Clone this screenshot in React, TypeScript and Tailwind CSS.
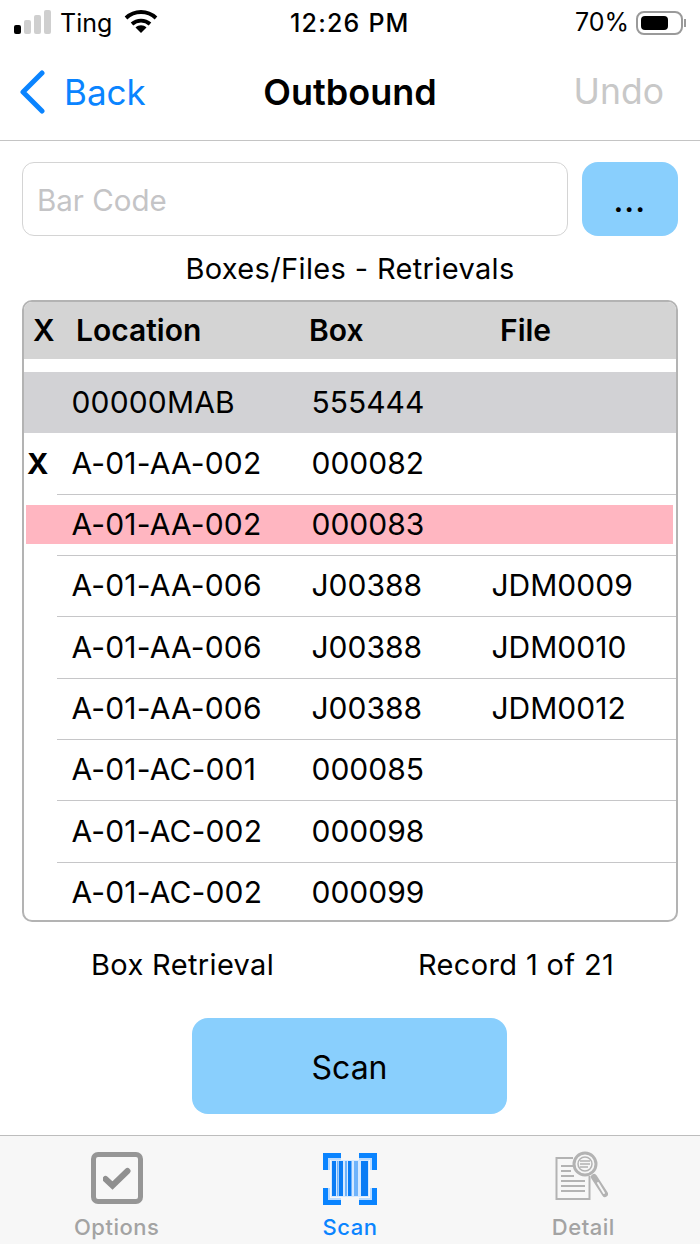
import React from 'react';

interface Row {
  mark?: string;
  location: string;
  box: string;
  file?: string;
}

const ROWS: Row[] = [
  { mark: 'X', location: 'A-01-AA-002', box: '000082' },
  { location: 'A-01-AA-002', box: '000083' },
  { location: 'A-01-AA-006', box: 'J00388', file: 'JDM0009' },
  { location: 'A-01-AA-006', box: 'J00388', file: 'JDM0010' },
  { location: 'A-01-AA-006', box: 'J00388', file: 'JDM0012' },
  { location: 'A-01-AC-001', box: '000085' },
  { location: 'A-01-AC-002', box: '000098' },
  { location: 'A-01-AC-002', box: '000099' },
];

const Cells = ({ row }: { row: Row }) => (
  <>
    <span className="w-[240px] shrink-0 tracking-[0.15px]">{row.location}</span>
    <span className="w-[180px] shrink-0">{row.box}</span>
    <span>{row.file}</span>
  </>
);

const BarcodeIcon = () => (
  <svg className="blur-[0.3px]" width="54" height="54" viewBox="0 0 54 54" fill="none">
    <path d="M6 18V7h12M36 7h12v11M6 36v11h12M36 47h12V36" stroke="#bcdcff" strokeWidth="2" />
    <path d="M2.500 18V3.500h15.500M36 3.500h15.500V18M2.500 36v14.500h15.500M36 50.500h15.500V36" stroke="#0a84ff" strokeWidth="5" />
    <rect x="8" y="8" width="38" height="37" fill="#d6e9ff" />
    <g fill="#0a7cf5">
      <rect x="9" y="9" width="4" height="35" />
      <rect x="16" y="9" width="4" height="35" />
      <rect x="25" y="9" width="3.500" height="35" />
      <rect x="38" y="9" width="7" height="35" />
    </g>
    <g fill="#6fb3fb">
      <rect x="14" y="9" width="1.500" height="35" />
      <rect x="22" y="9" width="2" height="35" />
      <rect x="31" y="9" width="4" height="35" />
    </g>
  </svg>
);

const DetailIcon = () => (
  <svg className="blur-[0.5px]" width="56" height="56" viewBox="0 0 56 56" fill="none" stroke="#b3b3b3">
    <path d="M18 8H1.500v41h33V26" strokeWidth="2" />
    <path d="M6 16h12M6 21h10M6 26h13M6 31h24M6 36h24M6 41h24" strokeWidth="1.800" />
    <circle cx="30" cy="14" r="11" strokeWidth="3" fill="#f7f7f7" />
    <circle cx="30" cy="14" r="7" strokeWidth="1.500" />
    <path d="M25 11h10M25 14h10M25 17h8" strokeWidth="1.500" />
    <path d="M39 27l11 17" strokeWidth="6" strokeLinecap="round" />
    <path d="M43 33l6 10" stroke="#f7f7f7" strokeWidth="2" strokeLinecap="round" />
  </svg>
);

export default function App() {
  return (
    <div className="flex flex-col h-[1244px] w-[700px] bg-white text-black overflow-hidden font-['Inter','Liberation_Sans',sans-serif]">
      {/* status bar */}
      <div className="relative flex items-center justify-between h-[48px] pl-[14px] pr-[14px] text-[25px]">
        <div className="flex items-center">
          <div className="flex items-end gap-[3px] h-[24px] mt-[-4px]">
            <div className="w-[7px] h-[9px] rounded-[2px] bg-black" />
            <div className="w-[7px] h-[14px] rounded-[2px] bg-[#cfcfcf]" />
            <div className="w-[7px] h-[19px] rounded-[2px] bg-[#cfcfcf]" />
            <div className="w-[7px] h-[24px] rounded-[2px] bg-[#cfcfcf]" />
          </div>
          <span className="ml-[9px]">Ting</span>
          <svg className="ml-[12px] -mt-[6px]" width="34" height="24" viewBox="0 0 34 24" fill="none">
            <path d="M2 9C10.500 1 23.500 1 32 9" stroke="#000" strokeWidth="3.800" />
            <path d="M8 15c5-4.500 13-4.500 18 0" stroke="#000" strokeWidth="3.800" />
            <path d="M11.500 18.500c3-3 8-3 11 0L17 24z" fill="#000" />
          </svg>
        </div>
        <span className="absolute left-[290px] top-[5px] font-medium tracking-[1.2px]">12:26 PM</span>
        <div className="flex items-center -mt-[3px]">
          <span>70%</span>
          <div className="ml-[7px] flex items-center justify-start w-[47px] h-[24px] rounded-[8px] border-2 border-[#9a9a9a] p-[3px]">
            <div className="w-[27px] h-full rounded-[4px] bg-black" />
          </div>
          <div className="w-[2px] h-[8px] bg-[#9a9a9a] ml-[1px]" />
        </div>
      </div>

      {/* nav bar */}
      <div className="relative flex items-center justify-between h-[93px] pb-[4px] pl-[19px] pr-[36px] border-b border-[#c4c4c4]">
        <div className="flex items-center text-[#0a84ff] text-[35px]">
          <svg width="28" height="44" viewBox="0 0 28 44" fill="none">
            <path d="M23 3L4 22l19 19" stroke="#0a84ff" strokeWidth="5" strokeLinecap="round" strokeLinejoin="round" />
          </svg>
          <span className="ml-[17px]">Back</span>
        </div>
        <span className="absolute left-0 right-0 text-center text-[36px] font-semibold pointer-events-none">Outbound</span>
        <span className="text-[35.500px] text-[#c8c8c8]">Undo</span>
      </div>

      {/* content */}
      <div className="flex-1 flex flex-col px-[22px]">
        <div className="flex gap-[14px] mt-[21px]">
          <div className="flex items-center flex-1 h-[74px] pl-[14px] pt-[2px] rounded-[12px] border border-[#d4d4d4] text-[29.500px] text-[#c4c4c6]">Bar Code</div>
          <div className="flex items-center justify-center w-[96px] h-[74px] rounded-[16px] bg-[#89cffd] text-[28px] font-bold tracking-[1.500px] pt-[5px]">...</div>
        </div>
        <div className="text-center text-[29px] tracking-[0.35px] h-[34px] leading-[34px] mt-[16px]">Boxes/Files - Retrievals</div>

        <div className="mt-[14px] h-[622px] rounded-[10px] border-2 border-[#b3b3b3] overflow-hidden text-[30px]">
          <div className="flex items-center h-[57px] bg-[#d4d4d4] font-semibold text-[30px]">
            <span className="w-[52px] pl-[9px] shrink-0">X</span>
            <span className="w-[233px] shrink-0">Location</span>
            <span className="w-[191px] shrink-0">Box</span>
            <span>File</span>
          </div>
          <div className="flex items-center h-[61px] mb-[0.500px] mt-[13px] pl-[47.500px] bg-[#d2d2d5]">
            <Cells row={{ location: '00000MAB', box: '555444' }} />
          </div>
          {ROWS.map((row, i) => (
            <div key={i} className="relative flex items-center h-[61.300px] pb-[1.500px] pl-[47.500px]">
              {i < ROWS.length - 1 && <div className="absolute left-[33px] right-0 bottom-0 h-px bg-[#c6c6c8]" />}
              {row.location === 'A-01-AA-002' && row.box === '000083' && (
                <div className="absolute left-[2px] right-[3px] top-[10.500px] h-[39px] bg-[#ffb6c1]" />
              )}
              {row.mark && <span className="absolute left-[3px] font-bold text-[29px]">{row.mark}</span>}
              <div className="relative flex items-center"><Cells row={row} /></div>
            </div>
          ))}
        </div>

        <div className="flex items-center h-[44px] mt-[21px] text-[29px] tracking-[0.35px]">
          <span className="ml-[69px] w-[327px] shrink-0">Box Retrieval</span>
          <span>Record 1 of 21</span>
        </div>
        <div className="flex justify-center mt-[31px] ml-[-1px]">
          <div className="flex items-center justify-center w-[315px] h-[96px] pt-[3px] rounded-[16px] bg-[#89cffd] text-[32px]">Scan</div>
        </div>
      </div>

      {/* tab bar */}
      <div className="flex h-[109px] bg-[#f7f7f7] border-t border-[#bdbdbd] text-[22px] tracking-[0.5px] font-medium text-[#a3a3a3]">
        <div className="flex-1 flex flex-col items-center pt-[16px]">
          <div className="flex items-center justify-center w-[52px] h-[52px] rounded-[7px] border-[5px] border-[#969696] blur-[0.5px]">
            <svg className="shrink-0" width="28" height="24" viewBox="0 0 28 24" fill="none">
              <path d="M2.500 13l7 6.500L24.500 5" stroke="#8f8f8f" strokeWidth="6" strokeLinecap="round" />
            </svg>
          </div>
          <span className="mt-[8px] leading-[30px]">Options</span>
        </div>
        <div className="flex-1 flex flex-col items-center pt-[16px] text-[#0a84ff]">
          <BarcodeIcon />
          <span className="mt-[6px] leading-[30px]">Scan</span>
        </div>
        <div className="flex-1 flex flex-col items-center pt-[14px]">
          <DetailIcon />
          <span className="mt-[6px] leading-[30px]">Detail</span>
        </div>
      </div>
    </div>
  );
}
